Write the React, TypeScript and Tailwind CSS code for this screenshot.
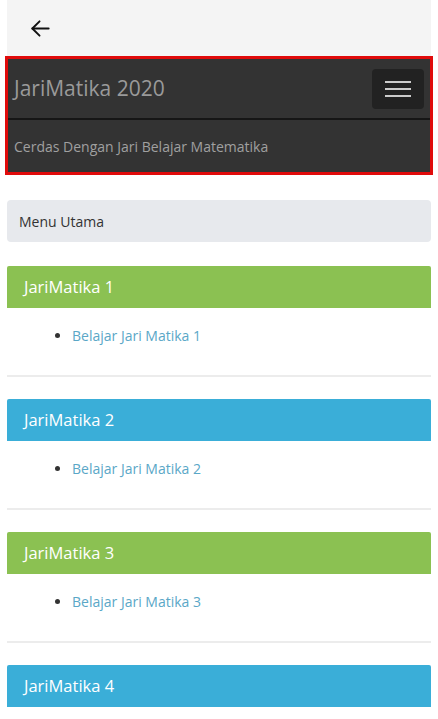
import React from "react";

const panels = [
  { title: "JariMatika 1", link: "Belajar Jari Matika 1", color: "bg-[#8bc152]" },
  { title: "JariMatika 2", link: "Belajar Jari Matika 2", color: "bg-[#3aaed8]" },
  { title: "JariMatika 3", link: "Belajar Jari Matika 3", color: "bg-[#8bc152]" },
  { title: "JariMatika 4", link: "Belajar Jari Matika 4", color: "bg-[#3aaed8]" },
];

export default function App() {
  return (
    <div className="h-[719px] overflow-hidden bg-white font-['Open_Sans',sans-serif]">
      <div className="mx-[7px] h-[56px] bg-[#f4f4f4] flex items-center pl-[22px]">
        <svg width="23" height="23" viewBox="0 0 24 24" fill="none" stroke="#111" strokeWidth="2" strokeLinecap="round" strokeLinejoin="round">
          <path d="M20.5 12H3.5" />
          <path d="M11 4.5L3.5 12l7.5 7.5" />
        </svg>
      </div>
      <div className="mx-[5px] border-[3px] border-[#e00b0b] bg-[#333333]">
        <div className="h-[59px] flex items-center justify-between pl-[6px] pr-[6px]">
          <span className="text-[21px] text-[#9a9a9a] leading-none">JariMatika 2020</span>
          <button className="w-[52px] h-[40px] rounded-[4px] bg-[#222222] flex flex-col items-center justify-center gap-[5px]">
            <span className="block w-[26px] h-[2px] bg-[#cccccc]" />
            <span className="block w-[26px] h-[2px] bg-[#cccccc]" />
            <span className="block w-[26px] h-[2px] bg-[#cccccc]" />
          </button>
        </div>
        <div className="h-[2px] bg-[#161616]" />
        <div className="h-[52px] flex items-center pl-[6px]">
          <span className="text-[14px] text-[#a0a0a0]">Cerdas Dengan Jari Belajar Matematika</span>
        </div>
      </div>
      <div className="mx-[7px] mt-[25px] h-[42px] rounded-[4px] bg-[#e7e9ed] flex items-center pl-[12px]">
        <span className="text-[14px] text-[#333333]">Menu Utama</span>
      </div>
      <div className="mx-[7px] mt-[24px] flex flex-col gap-[22px]">
        {panels.map((p) => (
          <div key={p.title} className="border-b-2 border-[#ececec]">
            <div className={`${p.color} h-[42px] rounded-t-[2px] flex items-center pl-[17px]`}>
              <span className="text-[16.5px] text-white">{p.title}</span>
            </div>
            <div className="h-[67px] pt-[17px]">
              <ul className="list-disc pl-[65px] marker:text-[#333]">
                <li className="text-[14px] text-[#5aa7c7] leading-[22px]">{p.link}</li>
              </ul>
            </div>
          </div>
        ))}
      </div>
    </div>
  );
}
